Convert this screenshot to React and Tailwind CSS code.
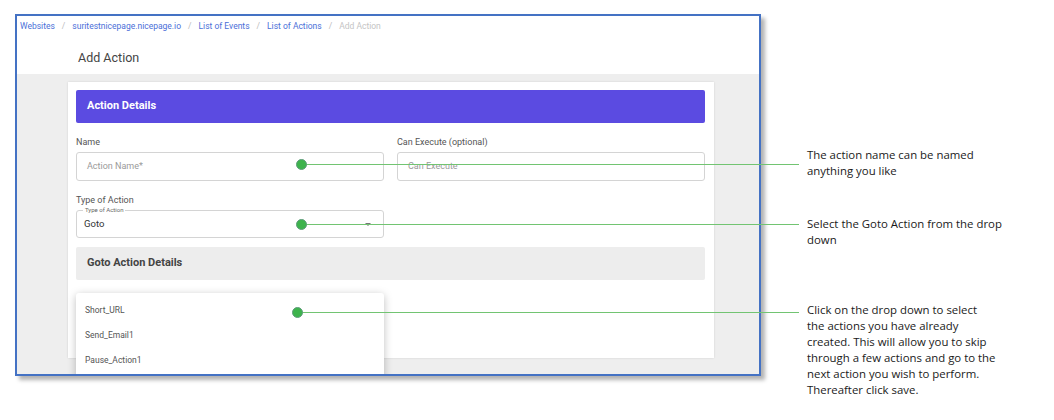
const crumbs = ["Websites", "suritestnicepage.nicepage.io", "List of Events", "List of Actions"];

const Callout = ({ x, y, top, lines }) => (
  <>
    <div
      className="absolute h-px bg-[#72c472]"
      style={{ left: x, top: y, width: 799 - x }}
    />
    <div
      className="absolute w-[11px] h-[11px] rounded-full bg-[#3db34c] border border-[#5f9c7c]"
      style={{ left: x - 5, top: y - 5 }}
    />
    <div
      className="absolute left-[807px] text-[11.4px] leading-[16px] text-[#1a1a1a]"
      style={{ top, fontFamily: '"Open Sans", sans-serif' }}
    >
      {lines.map((l) => (
        <div key={l}>{l}</div>
      ))}
    </div>
  </>
);

const Field = ({ label, placeholder }) => (
  <div>
    <div className="mt-[13px] mb-[4px] text-[9px] leading-[12px] text-[#555]">{label}</div>
    <div className="h-[29px] border border-[#d4d4d4] rounded-[3px] flex items-center pl-[10px] text-[9px] text-[#9a9a9a]">
      {placeholder}
    </div>
  </div>
);

export default function App() {
  return (
    <div
      className="relative w-[1054px] h-[420px] bg-white overflow-hidden"
      style={{ fontFamily: "Roboto, sans-serif" }}
    >
      <div className="ml-[15px] mt-[14px] w-[746px] h-[362px] border-2 border-[#4472c4] shadow-[4px_4px_4px_rgba(0,0,0,0.3)] overflow-hidden flex flex-col">
        <div className="h-[58px] bg-white shrink-0">
          <div className="pt-[4px] pl-[3px] flex items-center text-[8.5px] leading-[12px]">
            {crumbs.map((c) => (
              <span key={c} className="flex items-center">
                <span className="text-[#4b6fd8]">{c}</span>
                <span className="mx-[7px] text-[#bbb]">/</span>
              </span>
            ))}
            <span className="text-[#c4c4c4]">Add Action</span>
          </div>
          <div className="mt-[18px] ml-[61px] text-[12.5px] leading-[16px] text-[#444]">Add Action</div>
        </div>

        <div className="flex-1 bg-[#eeeeee] pt-[8px] pl-[51px]">
          <div className="w-[646px] h-[276px] bg-white shadow-[0_0_2px_rgba(0,0,0,0.12)] pt-[8px] pl-[8px] pr-[9px]">
            <div className="h-[33px] bg-[#5b4be1] rounded-[2px] flex items-center pl-[11px] text-[11px] font-bold text-white">
              Action Details
            </div>

            <div className="grid grid-cols-2 gap-x-[13px]">
              <Field label="Name" placeholder="Action Name*" />
              <Field label="Can Execute (optional)" placeholder="Can Execute" />
            </div>

            <div className="mt-[13px] mb-[4px] text-[9px] leading-[12px] text-[#555]">Type of Action</div>
            <div className="relative w-[308px] h-[28px] border border-[#d4d4d4] rounded-[3px] flex items-center pl-[7px] pr-[12px] text-[9.5px] text-[#333]">
              <span className="absolute left-[6px] -top-[5px] bg-white px-[2px] text-[6px] leading-[8px] text-[#666]">
                Type of Action
              </span>
              <span className="flex-1">Goto</span>
              <span className="w-0 h-0 border-l-[3px] border-r-[3px] border-t-[3px] border-l-transparent border-r-transparent border-t-[#777]" />
            </div>

            <div className="mt-[9px] h-[33px] bg-[#ededed] rounded-[2px] flex items-center pl-[11px] text-[11px] font-bold text-[#444]">
              Goto Action Details
            </div>

            <div className="relative">
              <div className="absolute top-[13px] left-0 w-[308px] h-[95px] bg-white rounded-[3px] shadow-[0_2px_8px_rgba(0,0,0,0.25)] pt-[5px] text-[8.5px] text-[#555]">
                {["Short_URL", "Send_Email1", "Pause_Action1"].map((i) => (
                  <div key={i} className="h-[25px] flex items-center pl-[9px]">
                    {i}
                  </div>
                ))}
              </div>
            </div>
          </div>
        </div>
      </div>

      <Callout x={301} y={164} top={147} lines={["The action name can be named", "anything you like"]} />
      <Callout x={301} y={224} top={216} lines={["Select the Goto Action from the drop", "down"]} />
      <Callout
        x={297}
        y={312}
        top={302}
        lines={[
          "Click on the drop down to select",
          "the actions you have already",
          "created. This will allow you to skip",
          "through a few actions and go to the",
          "next action you wish to perform.",
          "Thereafter click save.",
        ]}
      />
    </div>
  );
}
